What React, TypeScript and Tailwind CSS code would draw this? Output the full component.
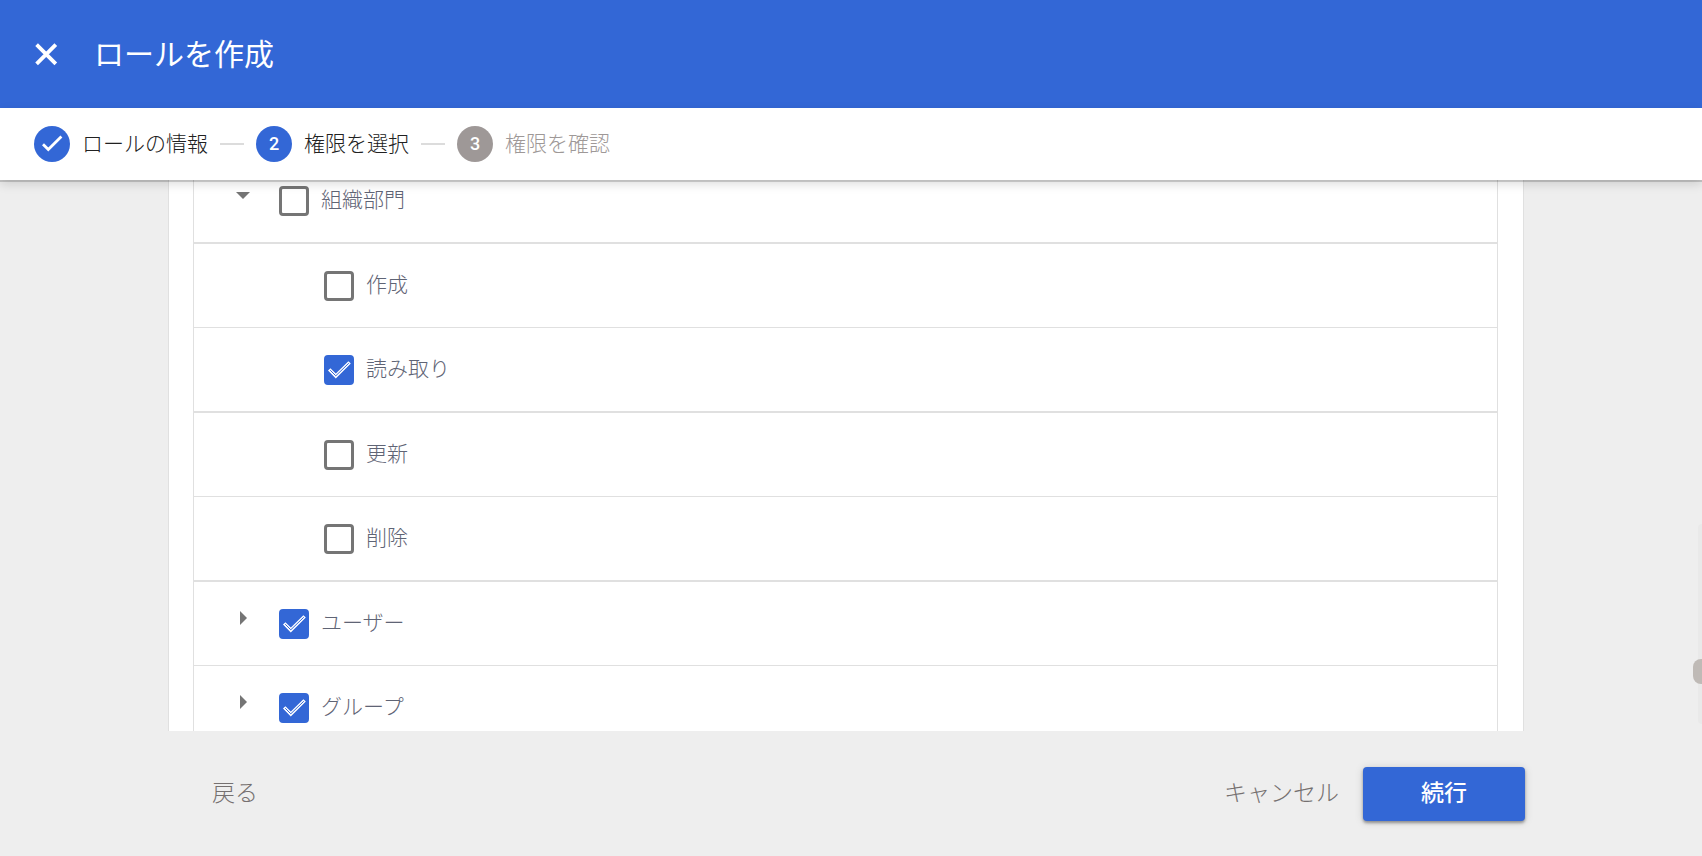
import { useState } from "react";
import clsx from "clsx";

type StepStatus = "done" | "current" | "upcoming";

interface Step {
  number: number;
  label: string;
  status: StepStatus;
}

interface Privilege {
  id: string;
  label: string;
  checked: boolean;
  level: "group" | "item";
  expanded?: boolean;
}

const steps: Step[] = [
  { number: 1, label: "ロールの情報", status: "done" },
  { number: 2, label: "権限を選択", status: "current" },
  { number: 3, label: "権限を確認", status: "upcoming" },
];

const initialPrivileges: Privilege[] = [
  { id: "org-units", label: "組織部門", checked: false, level: "group", expanded: true },
  { id: "org-create", label: "作成", checked: false, level: "item" },
  { id: "org-read", label: "読み取り", checked: true, level: "item" },
  { id: "org-update", label: "更新", checked: false, level: "item" },
  { id: "org-delete", label: "削除", checked: false, level: "item" },
  { id: "users", label: "ユーザー", checked: true, level: "group", expanded: false },
  { id: "groups", label: "グループ", checked: true, level: "group", expanded: false },
];

const CloseIcon = () => (
  <svg viewBox="0 0 24 24" className="size-6" fill="none" stroke="currentColor" strokeWidth="3.8">
    <path d="M2.6 2.6 21.8 21.8M21.8 2.6 2.6 21.8" />
  </svg>
);

const StepBadge = ({ step }: { step: Step }) => (
  <span
    className={clsx(
      "flex size-9 items-center justify-center rounded-full font-['Roboto',sans-serif] text-lg font-medium text-white",
      step.status === "upcoming" ? "bg-[#9e9897]" : "bg-[#3367d6]"
    )}
  >
    {step.status === "done" ? (
      <svg viewBox="0 0 36 36" className="size-9" fill="none" stroke="currentColor" strokeWidth="2.8">
        <path d="M9 18.2 14.3 23.5 27.4 10.6" />
      </svg>
    ) : (
      step.number
    )}
  </span>
);

const Stepper = () => (
  <ol className="relative z-10 flex h-18 shrink-0 items-center gap-3 bg-white px-[34px] shadow-[0_2px_0_rgba(0,0,0,0.16),0_4px_10px_rgba(0,0,0,0.14)]">
    {steps.map((step, index) => (
      <li key={step.number} className="flex items-center gap-3">
        {index > 0 && <span className="h-0.5 w-6 bg-[#dcdcdc]" />}
        <StepBadge step={step} />
        <span
          className={clsx(
            "pb-1 text-[21px] leading-7 font-light",
            step.status === "upcoming" ? "text-[#9e9897]" : "text-[#212121]"
          )}
        >
          {step.label}
        </span>
      </li>
    ))}
  </ol>
);

interface PrivilegeRowProps {
  privilege: Privilege;
  onToggle: (id: string) => void;
}

const PrivilegeRow = ({ privilege, onToggle }: PrivilegeRowProps) => (
  <li
    className={clsx(
      "box-content flex h-[83px] items-center border-b border-[#e0e0e0] odd:border-b-2",
      privilege.level === "group" ? "pl-[34px]" : "pl-[130px]"
    )}
  >
    {privilege.level === "group" && (
      <button
        type="button"
        aria-label={privilege.label}
        aria-expanded={privilege.expanded}
        className="mr-[21px] mb-3 flex size-[30px] items-center justify-center text-[#757575]"
      >
        <svg viewBox="0 0 16 16" className="size-4" fill="currentColor">
          {privilege.expanded ? <path d="M1 5h14l-7 7z" /> : <path d="M5 1v14l7-7z" />}
        </svg>
      </button>
    )}
    <span className="relative size-[30px]">
      <input
        id={privilege.id}
        type="checkbox"
        checked={privilege.checked}
        onChange={() => onToggle(privilege.id)}
        className="block size-[30px] appearance-none rounded-sm border-3 border-[#757575] checked:border-[#3367d6] checked:bg-[#3367d6]"
      />
      {privilege.checked && (
        <svg viewBox="0 0 30 30" className="pointer-events-none absolute inset-0 size-[30px]" fill="none">
          <path d="M5.2 14.4 11.8 21 25.6 7.4" stroke="#fff" strokeWidth="3.4" />
          <path d="M6.2 15.2 11.8 20.8 24.8 8.2" stroke="#3367d6" strokeWidth="1" />
        </svg>
      )}
    </span>
    <label htmlFor={privilege.id} className="pb-1.5 pl-3 text-[21px] leading-7 font-light text-[#5f6475]">
      {privilege.label}
    </label>
  </li>
);

const App = () => {
  const [privileges, setPrivileges] = useState(initialPrivileges);

  const handleToggle = (id: string) => {
    setPrivileges((current) =>
      current.map((item) => (item.id === id ? { ...item, checked: !item.checked } : item))
    );
  };

  return (
    <div
      lang="ja"
      className="relative flex h-screen flex-col overflow-hidden bg-[#eeeeee] font-['Noto_Sans_CJK_JP',sans-serif]"
    >
      <header className="flex h-27 shrink-0 items-center gap-9 bg-[#3367d6] px-[34px] text-white">
        <button type="button" aria-label="閉じる">
          <CloseIcon />
        </button>
        <h1 className="pb-1 text-[30px] leading-10">ロールを作成</h1>
      </header>

      <Stepper />

      <main className="flex min-h-0 flex-1 flex-col pr-[178px] pl-[168px]">
        <div className="min-h-0 flex-1 overflow-hidden border-x border-[#e0e0e0] bg-white pr-[25px] pl-6">
          <ul className="-mt-[21px] border-x border-[#e0e0e0]">
            {privileges.map((privilege) => (
              <PrivilegeRow key={privilege.id} privilege={privilege} onToggle={handleToggle} />
            ))}
          </ul>
        </div>

        <footer className="-mr-px flex h-[125px] shrink-0 items-center text-[23px] leading-8 font-light text-[#757070]">
          <button type="button" className="ml-11 pb-1.5">
            戻る
          </button>
          <button type="button" className="mr-6 ml-auto pb-1.5">
            キャンセル
          </button>
          <button
            type="button"
            className="h-[54px] w-[162px] rounded-sm bg-[#3367d6] pb-1.5 font-medium text-white shadow-[0_2px_3px_rgba(0,0,0,0.35),0_1px_8px_rgba(0,0,0,0.15)]"
          >
            続行
          </button>
        </footer>
      </main>

      {/* edge scrubber */}
      <div className="absolute right-0 bottom-[132px] h-[200px] w-1 rounded-l-full bg-[#e9e9e9]" />
      <div className="absolute right-0 bottom-[172px] h-[25px] w-[9px] rounded-l-lg bg-[#bfbab6]" />
    </div>
  );
};

export default App;
